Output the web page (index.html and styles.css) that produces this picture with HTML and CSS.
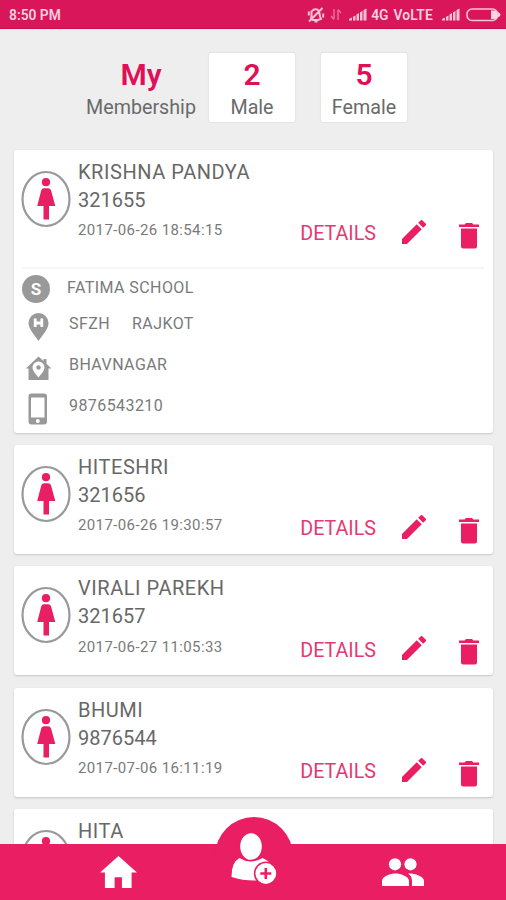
FILE: index.html
```html
<!DOCTYPE html>
<html lang="en">
<head>
<meta charset="utf-8">
<title>My Membership</title>
<link rel="stylesheet" href="styles.css">
</head>
<body>
<svg class="sprite" aria-hidden="true">
  <symbol id="female" viewBox="0 0 50 58">
    <ellipse cx="25" cy="29" rx="23.5" ry="27" fill="#fff" stroke="#999" stroke-width="2.2"/>
    <circle cx="25" cy="12.200" r="4.100" fill="#e91e63"/>
    <path d="M23 18.300h4q2.300 0 3 2L34.300 36H28v13.500h-5.500V36H16.200L20.300 20.300q.6-2 2.700-2z" fill="#e91e63"/>
  </symbol>
  <symbol id="edit" viewBox="3 3 18 18"><path fill="#e91e63" d="M3 17.250V21h3.750L17.810 9.940l-3.750-3.750L3 17.250zM20.710 7.040a1 1 0 0 0 0-1.410l-2.340-2.340a1 1 0 0 0-1.410 0l-1.830 1.830 3.750 3.750 1.830-1.830z"/></symbol>
  <symbol id="trash" viewBox="0 0 20 26"><path fill="#e91e63" d="M2 5.500h16V23.500q0 2-2 2H4q-2 0-2-2zM0 1.500h5.500L7 0h6l1.500 1.500H20V4H0z"/></symbol>
  <symbol id="signal" viewBox="0 0 18 13"><path fill="#f9c3d6" d="M0 12.500v-1.500l3-1.500v3zM4 12.500V8.800L6.500 7.500v5zM7.500 12.500V6.500L10 5v7.500zM11 12.500V4.300L13.500 3v9.500zM14.500 12.500V2L17.500.5v12z"/></symbol>
</svg>

<header class="status">
  <span class="clock">8:50 PM</span>
  <svg class="mute" viewBox="0 0 18 18" fill="none" stroke="#f9c3d6" stroke-width="2"><path d="M4.500 5.500 7 3.500q3-1 5 1.500l1 5.500 1 2.500-3 1H6L4 13l.5-3zM7.500 15.500h3M15.500 2 2 15.500M1.800 5.500v4M16.200 7.500v4"/></svg>
  <svg class="arrows" viewBox="0 0 12 13" fill="none" stroke="#ea6c98" stroke-width="1.500"><path d="M4 1v10M1 8l3 3.500M8 12V2M8 1.500l3 3.500"/></svg>
  <svg class="signal"><use href="#signal"/></svg>
  <span class="net">4G</span><span class="volte">VoLTE</span>
  <svg class="signal second"><use href="#signal"/></svg>
  <svg class="battery" viewBox="0 0 35 14"><rect x="1" y="1" width="30.500" height="11.500" rx="5" fill="none" stroke="#f9c3d6" stroke-width="1.600"/><path d="M25 2.500h4q2 0 2 2v4.500q0 2-2 2h-4zM32 4q2.500 1 2.500 2.800T32 9.500z" fill="#fbd5e2"/></svg>
</header>

<main>
  <section class="stats">
    <div class="stat own"><b>My</b><span>Membership</span></div>
    <div class="stat box"><b>2</b><span>Male</span></div>
    <div class="stat box"><b>5</b><span>Female</span></div>
  </section>

  <section class="list">
    <article class="card">
      <div class="summary">
        <svg class="avatar"><use href="#female"/></svg>
        <div class="info"><h2>KRISHNA PANDYA</h2><p>321655</p><time>2017-06-26 18:54:15</time></div>
        <div class="actions"><span>DETAILS</span><svg class="edit"><use href="#edit"/></svg><svg class="trash"><use href="#trash"/></svg></div>
      </div>
      <div class="extra">
        <div class="line school"><svg viewBox="0 0 32 32"><circle cx="14" cy="16" r="14" fill="#999"/><text x="14" y="22" text-anchor="middle" class="mark">S</text></svg><span>FATIMA SCHOOL</span></div>
        <div class="line place"><svg viewBox="0 0 32 32"><path fill="#999" d="M16.500 3A10 10 0 0 1 26.500 13C26.500 19 20.500 25 16.500 31 12.500 25 6.500 19 6.500 13A10 10 0 0 1 16.500 3z"/><path d="M13.200 8.500v8.500M19.800 8.500v8.500M13.200 13H20" stroke="#fff" stroke-width="2.800"/></svg><span>SFZH</span><span class="city">RAJKOT</span></div>
        <div class="line home"><svg viewBox="0 0 32 32"><path fill="#999" d="M16.500 3.500 21.500 8V6h3v4.700L29.500 15.500h-3v11.500h-20V15.500H3.800z"/><path fill="#fff" d="M16.500 8.500a6 6 0 0 1 6 6c0 3.500-3.500 6.500-6 10-2.500-3.500-6-6.500-6-10a6 6 0 0 1 6-6z"/><circle cx="16.500" cy="14.500" r="2.200" fill="#999"/></svg><span>BHAVNAGAR</span></div>
        <div class="line phone"><svg viewBox="0 0 32 32"><rect x="6.500" y=".5" width="18.500" height="31" rx="3" fill="#999"/><path d="M9 4.500h13.500v20H9z" fill="#fff"/><circle cx="15.800" cy="28" r="2" fill="#fff"/></svg><span>9876543210</span></div>
      </div>
    </article>
    <article class="card">
      <div class="summary">
        <svg class="avatar"><use href="#female"/></svg>
        <div class="info"><h2>HITESHRI</h2><p>321656</p><time>2017-06-26 19:30:57</time></div>
        <div class="actions"><span>DETAILS</span><svg class="edit"><use href="#edit"/></svg><svg class="trash"><use href="#trash"/></svg></div>
      </div>
    </article>
    <article class="card">
      <div class="summary">
        <svg class="avatar"><use href="#female"/></svg>
        <div class="info"><h2>VIRALI PAREKH</h2><p>321657</p><time>2017-06-27 11:05:33</time></div>
        <div class="actions"><span>DETAILS</span><svg class="edit"><use href="#edit"/></svg><svg class="trash"><use href="#trash"/></svg></div>
      </div>
    </article>
    <article class="card">
      <div class="summary">
        <svg class="avatar"><use href="#female"/></svg>
        <div class="info"><h2>BHUMI</h2><p>9876544</p><time>2017-07-06 16:11:19</time></div>
        <div class="actions"><span>DETAILS</span><svg class="edit"><use href="#edit"/></svg><svg class="trash"><use href="#trash"/></svg></div>
      </div>
    </article>
    <article class="card">
      <div class="summary">
        <svg class="avatar"><use href="#female"/></svg>
        <div class="info"><h2>HITA</h2></div>
      </div>
    </article>
  </section>
</main>

<nav class="tabs">
  <svg class="tab-home" viewBox="0 0 38 34"><path fill="#fff" d="M19 0 38 17h-5.500v16H22.500V22h-7.500v11H5V17H0z"/></svg>
  <div class="add">
    <svg viewBox="0 0 46 52"><path fill="#fff" d="M8.500 25q11 7 23 0 7 3 9 8v13q-22 4-40-2 0-15 8-19z"/><ellipse cx="20" cy="13.500" rx="12.200" ry="14.500" fill="#e91e63"/><ellipse cx="20" cy="13.500" rx="10.800" ry="13.300" fill="#fff"/><circle cx="34.800" cy="40.500" r="12" fill="#e91e63"/><circle cx="34.800" cy="40.500" r="10.400" fill="#fff"/><path d="M34.800 35v11M29.300 40.500h11" stroke="#e91e63" stroke-width="2.600"/></svg>
  </div>
  <svg class="tab-people" viewBox="0 0 42 28"><circle cx="13" cy="6.300" r="6.100" fill="#fff"/><circle cx="28.500" cy="6.300" r="6.100" fill="#fff"/><path fill="#fff" d="M0 28v-5c0-5 9-7.500 13.500-7.500S27 18 27 23v5zM27.500 15.500c5 0 14.500 2.500 14.500 7.500v5H30v-5c0-3.500-1.500-5.500-4-7.400z"/></svg>
</nav>
</body>
</html>
```

FILE: styles.css
```css
* { box-sizing: border-box; }
body {
  margin: 0;
  height: 900px;
  overflow: hidden;
  display: flex;
  flex-direction: column;
  background: #eee;
  color: #686868;
  font-family: Roboto, sans-serif;
}
svg { display: block; flex: none; }
.sprite { position: absolute; width: 0; height: 0; }

.status {
  flex: none;
  height: 29px;
  padding: 1px 5px 0 9px;
  display: flex;
  align-items: center;
  background: #d81659;
  border-bottom: 1px solid #c9104f;
  color: #fbd0df;
  font-size: 13.800px;
  font-weight: 600;
}
.clock { margin-right: auto; }
.mute { width: 18px; height: 18px; }
.arrows { width: 12px; height: 13px; margin: 0 7px 0 5px; }
.signal { width: 18px; height: 13px; }
.net { margin: 0 5px 0 4px; }
.volte { margin-right: 9px; letter-spacing: .2px; }
.battery { width: 35px; height: 14px; margin-left: 6px; }

main { flex: 1; min-height: 0; overflow: hidden; }
.stats { display: flex; padding: 24px 0 0 86px; height: 120.700px; }
.stat {
  height: 69px;
  display: flex;
  flex-direction: column;
  align-items: center;
  color: #6a6a6a;
  font-size: 19.700px;
  line-height: 28px;
}
.stat b { padding-top: 4px; height: 41px; line-height: 36px; font-size: 30px; font-weight: 600; color: #e01058; }
.own { width: 110px; margin-right: 13px; }
.box { width: 86px; margin-right: 26px; background: #fff; border-radius: 2px; box-shadow: 0 0 2px #ccc; }

.list { padding: 0 13px 0 14px; display: flex; flex-direction: column; gap: 12.300px; }
.card { flex: none; background: #fff; border-radius: 3px; box-shadow: 0 1px 2px #c6c6c6; }
.summary { height: 109px; padding: 8px 14px 0 7px; display: flex; }
.avatar { width: 50px; height: 58px; margin-top: 12px; }
.info { margin-left: 7px; flex: 1; font-size: 20px; line-height: 28px; }
.info h2, .info p { margin: 0; font-size: 20px; font-weight: 400; white-space: nowrap; }
.info h2 { letter-spacing: .55px; }
.info time { display: block; margin-top: 6.500px; font-size: 15px; line-height: 20px; letter-spacing: .38px; color: #7a7a7a; }
.actions { display: flex; align-items: center; height: 28px; margin-top: 62px; color: #e53973; font-size: 19.700px; }
.edit { width: 24px; height: 24px; margin: -4px 33px 0 26px; }
.trash { width: 20px; height: 26px; margin-top: 4px; }

.extra { margin: 8px 9px 0 8px; height: 166px; border-top: 2px solid #f6f6f6; font-size: 16px; letter-spacing: .42px; color: #7a7a7a; }
.line { display: flex; align-items: center; height: 40px; }
.line svg { width: 32px; height: 32px; }
.line span { margin-left: 15px; padding-top: 2px; white-space: nowrap; }
.line .city { margin-left: 22px; }
.school { height: 36px; }
.school span { margin-left: 13px; }
.school svg { margin-top: 4px; }
.place { height: 36px; }
.place svg { margin: 7px 0 -2px; }
.home { height: 46px; }
.home svg { margin-top: 10px; }
.phone { height: 36px; }
.phone svg { margin: 9px 0 -5px; }
.phone svg, .place svg { align-self: flex-start; }
.phone svg { margin-top: 6px; }
.place svg { margin-top: 5px; }
.mark { font-size: 17px; font-weight: 700; letter-spacing: 0; fill: #fff; }

.tabs { flex: none; height: 56px; display: flex; background: #e91e63; padding-left: 100px; }
.tab-home { width: 37px; height: 33px; margin-top: 12px; }
.add { width: 78px; height: 82px; margin: -27px 0 0 78px; padding: 16px 0 0 16px; border-radius: 39px 39px 0 0; background: #e91e63; }
.add svg { width: 46px; height: 52px; }
.tab-people { width: 42px; height: 28px; margin: 14px 0 0 89px; }
```
